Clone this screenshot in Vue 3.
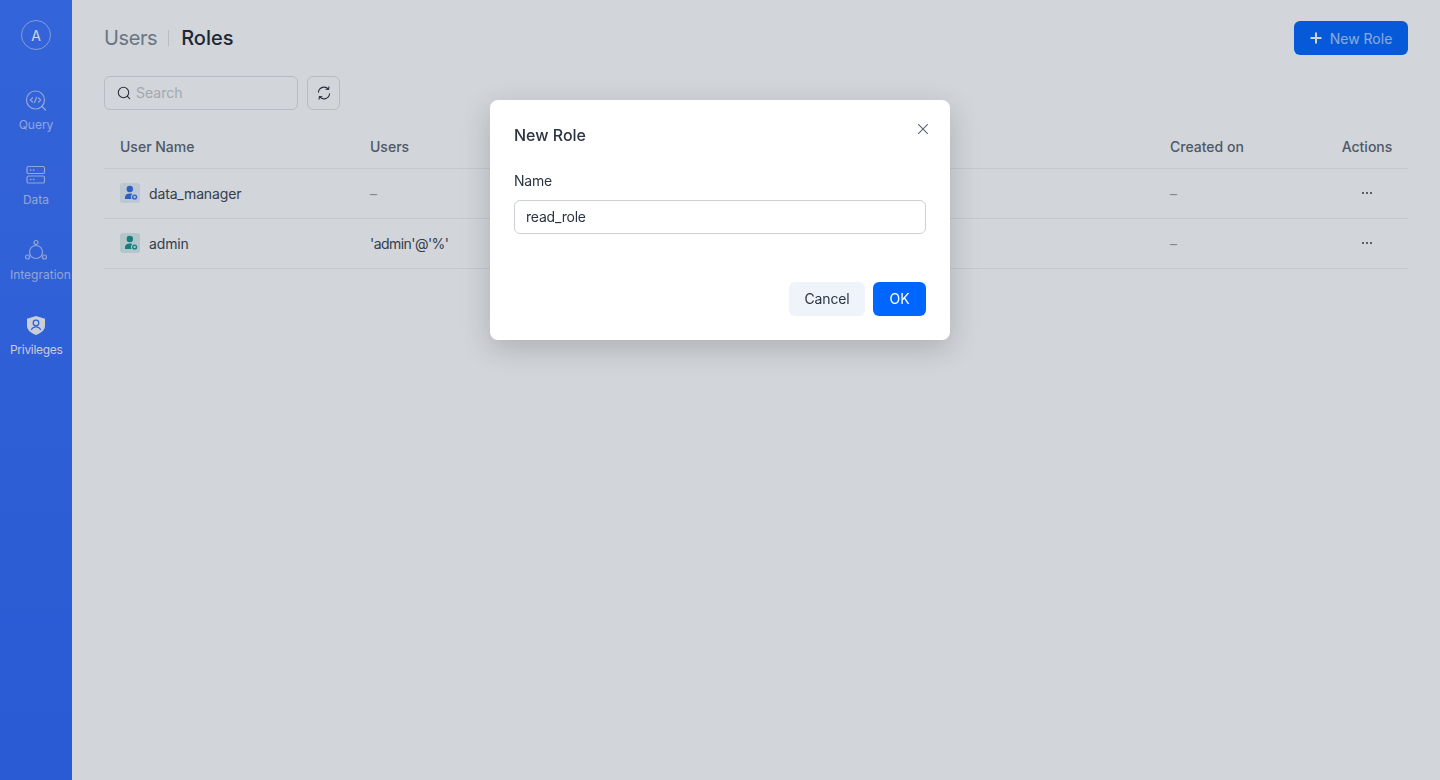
<script setup>
import { ref } from "vue";

const navItems = [
  { key: "query", label: "Query" },
  { key: "data", label: "Data" },
  { key: "integration", label: "Integration" },
  { key: "privileges", label: "Privileges", active: true },
];

const roles = [
  { name: "data_manager", users: "–", color: "blue" },
  { name: "admin", users: "'admin'@'%'", color: "teal" },
];

const roleName = ref("read_role");
</script>

<template>
  <div class="layout">
    <aside class="sidebar">
      <div class="avatar">A</div>
      <nav class="nav">
        <div
          v-for="item in navItems"
          :key="item.key"
          class="nav-item"
          :class="{ active: item.active }"
        >
          <svg v-if="item.key === 'query'" viewBox="0 -1 24 24" width="24" height="24" fill="none" stroke="currentColor" stroke-width="1.2" stroke-linecap="round" stroke-linejoin="round">
            <circle cx="11.5" cy="11" r="9" />
            <path d="M18 17.5l3.5 3.5" />
            <path d="M8.5 9l-2.2 2 2.2 2M14.5 9l2.2 2-2.2 2M12.6 8.4l-2.2 5.2" />
          </svg>
          <svg v-else-if="item.key === 'data'" viewBox="0 0 24 24" width="24" height="24" fill="none" stroke="currentColor" stroke-width="1.2" stroke-linecap="round">
            <rect x="3" y="3.5" width="17.5" height="7" rx="1.6" />
            <rect x="3" y="13" width="17.5" height="7" rx="1.6" />
            <path d="M6.4 7h.5M9.4 7h.5M6.4 16.5h.5M9.4 16.5h.5" stroke-width="1.5" />
          </svg>
          <svg v-else-if="item.key === 'integration'" viewBox="0 0 24 24" width="24" height="24" fill="none" stroke="currentColor" stroke-width="1.2">
            <circle cx="12" cy="14" r="6.500" />
            <circle cx="12" cy="4.500" r="2" />
            <circle cx="3.500" cy="19" r="2" />
            <circle cx="20.500" cy="19" r="2" />
          </svg>
          <svg v-else viewBox="0 0 24 24" width="24" height="24">
            <path d="M12 3l9 2.800v6.700c0 4.600-3.800 7.500-9 9.500-5.200-2-9-4.900-9-9.500V5.800z" fill="currentColor" />
            <circle cx="12" cy="10" r="2.800" fill="none" stroke="#3470ff" stroke-width="1.300" />
            <path d="M7.500 16.500c1-1.800 2.600-2.600 4.500-2.600s3.500.8 4.500 2.600" fill="none" stroke="#3470ff" stroke-width="1.300" stroke-linecap="round" />
          </svg>
          <span class="nav-label">{{ item.label }}</span>
        </div>
      </nav>
    </aside>

    <main class="main">
      <header class="page-head">
        <div class="tabs">
          <span class="tab">Users</span>
          <i class="tab-sep"></i>
          <span class="tab current">Roles</span>
        </div>
        <button class="btn-new">
          <svg viewBox="0 0 12 12" width="12" height="12" fill="none" stroke="currentColor" stroke-width="2">
            <path d="M6 .5v11M.5 6h11" />
          </svg>
          <span>New Role</span>
        </button>
      </header>

      <div class="toolbar">
        <label class="search">
          <svg viewBox="0 0 14 14" width="14" height="14" fill="none" stroke="#2c3441" stroke-width="1.100" stroke-linecap="round">
            <circle cx="6.500" cy="6.500" r="5.200" />
            <path d="M10.400 10.400l2.300 2.300" />
          </svg>
          <span class="placeholder">Search</span>
        </label>
        <button class="btn-refresh">
          <svg viewBox="0 0 14 14" width="14" height="14" fill="none" stroke="#2c3441" stroke-width="1.100" stroke-linecap="round" stroke-linejoin="round">
            <path d="M1.400 6.200A5.700 5.700 0 0 1 11.500 3.300" />
            <path d="M12.600 7.800A5.700 5.700 0 0 1 2.500 10.700" />
            <path d="M11.900 .9l-.3 2.600-2.600-.2M2.100 13.100l.3-2.600 2.600.2" />
          </svg>
        </button>
      </div>

      <table class="grid">
        <thead>
          <tr>
            <th class="col-name">User Name</th>
            <th>Users</th>
            <th class="col-created">Created on</th>
            <th class="col-actions">Actions</th>
          </tr>
        </thead>
        <tbody>
          <tr v-for="role in roles" :key="role.name">
            <td>
              <div class="role-cell">
                <span class="role-icon" :class="role.color">
                  <svg viewBox="0 0 20 20" width="20" height="20">
                    <circle cx="9.800" cy="6" r="3.200" fill="currentColor" />
                    <path d="M5 16v-1.700c0-2.300 1.800-3.700 4.800-3.700 1 0 1.900.1 2.600.4a4 4 0 0 0-.9 5z" fill="currentColor" />
                    <circle cx="14.600" cy="14" r="1.900" fill="none" stroke="currentColor" stroke-width="1.400" />
                  </svg>
                </span>
                <span>{{ role.name }}</span>
              </div>
            </td>
            <td :class="role.users === '–' ? 'muted' : 'host'">{{ role.users }}</td>
            <td class="muted">–</td>
            <td class="col-actions">
              <svg class="more" viewBox="0 0 10 2" width="10" height="2" fill="#1f2733">
                <circle cx="1" cy="1" r="0.900" />
                <circle cx="5" cy="1" r="0.900" />
                <circle cx="9" cy="1" r="0.900" />
              </svg>
            </td>
          </tr>
        </tbody>
      </table>
    </main>

    <div class="mask">
      <div class="modal">
        <h2 class="modal-title">New Role</h2>
        <button class="modal-close" aria-label="Close">
          <svg viewBox="0 0 12 12" width="12" height="12" fill="none" stroke="#5b6471" stroke-width="1.100">
            <path d="M1.200 1.200l9.600 9.600M10.800 1.200l-9.600 9.600" />
          </svg>
        </button>
        <label class="field-label" for="role-name">Name</label>
        <input id="role-name" v-model="roleName" class="field-input" type="text" />
        <div class="modal-foot">
          <button class="btn-cancel">Cancel</button>
          <button class="btn-ok">OK</button>
        </div>
      </div>
    </div>
  </div>
</template>

<style>
html, body { margin: 0; background: #fff; }
</style>

<style scoped>
.layout {
  display: flex;
  min-height: 780px;
  font-family: Inter, "Liberation Sans", sans-serif;
  font-size: 14px;
  color: #1f2733;
}

.sidebar {
  width: 72px;
  flex: none;
  display: flex;
  flex-direction: column;
  align-items: center;
  background: linear-gradient(180deg, #3a72ff 0%, #2d66f9 100%);
}
.avatar {
  width: 30px;
  height: 30px;
  box-sizing: border-box;
  margin-top: 20px;
  border: 1px solid rgba(255, 255, 255, 0.5);
  border-radius: 50%;
  display: flex;
  align-items: center;
  justify-content: center;
  color: #fff;
  font-size: 14px;
}
.nav {
  margin-top: 38px;
  display: flex;
  flex-direction: column;
  gap: 29px;
}
.nav-item {
  width: 52px;
  height: 46px;
  display: flex;
  flex-direction: column;
  align-items: center;
  justify-content: space-between;
  color: rgba(255, 255, 255, 0.6);
  font-size: 12px;
  line-height: 18px;
}
.nav-label {
  display: block;
  width: 52px;
  text-align: center;
  white-space: nowrap;
}
.nav-item.active { color: rgba(255, 255, 255, 0.95); }
.nav-item.active .nav-label { letter-spacing: -0.3px; }

.main {
  flex: 1;
  min-width: 0;
  padding: 0 32px;
}
.page-head {
  height: 76px;
  display: flex;
  align-items: center;
  justify-content: space-between;
}
.tabs {
  display: flex;
  align-items: center;
  font-size: 20px;
}
.tab { color: #7d8794; font-weight: 400; letter-spacing: -0.4px; }
.tab.current { color: #1f2733; font-weight: 500; letter-spacing: 0; }
.tab-sep {
  width: 1px;
  height: 16px;
  margin: 0 12px 0 11px;
  background: #dfe2e6;
}
.btn-new {
  width: 114px;
  height: 34px;
  display: flex;
  align-items: center;
  justify-content: center;
  gap: 8px;
  border: 0;
  border-radius: 6px;
  background: #0066ff;
  color: #fff;
  font: inherit;
  font-size: 14px;
}
.btn-new span { opacity: 0.65; }

.toolbar {
  display: flex;
  gap: 9px;
  margin-bottom: 16px;
}
.search {
  width: 194px;
  height: 34px;
  box-sizing: border-box;
  display: flex;
  align-items: center;
  gap: 5px;
  padding: 0 12px;
  border: 1px solid #dde0e6;
  border-radius: 6px;
}
.placeholder { color: #c3c8d0; position: relative; top: -1px; }
.btn-refresh {
  width: 33px;
  height: 34px;
  padding: 0;
  display: flex;
  align-items: center;
  justify-content: center;
  border: 1px solid #dde0e6;
  border-radius: 6px;
  background: transparent;
}

.grid {
  width: 100%;
  border-collapse: collapse;
  table-layout: fixed;
}
.grid th {
  height: 42px;
  padding: 0 16px;
  box-sizing: border-box;
  text-align: left;
  font-weight: 500;
  color: #5b6471;
  border-bottom: 1px solid #eef0f3;
}
.grid td {
  height: 50px;
  padding: 0 16px;
  box-sizing: border-box;
  color: #3a4350;
  letter-spacing: -0.15px;
  border-bottom: 1px solid #eef0f3;
}
.grid td.muted { color: #9aa1ab; }
.grid td.host { letter-spacing: -0.55px; }
.col-name { width: 250px; }
.col-created { width: 172px; }
.grid th.col-actions { width: 82px; padding: 0; text-align: center; }
.grid td.col-actions { padding: 0; text-align: center; }
.more { display: inline-block; vertical-align: middle; margin-bottom: 3px; }
.role-cell {
  display: flex;
  align-items: center;
  gap: 9px;
}
.role-icon {
  width: 20px;
  height: 20px;
  display: block;
  border-radius: 3px;
}
.role-icon svg { display: block; }
.role-icon.blue { background: #e6eef9; color: #2f6fe4; }
.role-icon.teal { background: #d9eeee; color: #15908c; }

.mask {
  position: fixed;
  inset: 0;
  background: rgba(30, 45, 65, 0.2);
}
.modal {
  position: absolute;
  left: 490px;
  top: 100px;
  width: 460px;
  height: 240px;
  box-sizing: border-box;
  padding: 24px;
  display: flex;
  flex-direction: column;
  background: #fff;
  border-radius: 8px;
  box-shadow: 0 8px 28px rgba(31, 39, 51, 0.22);
}
.modal-title {
  margin: 0;
  font-size: 16px;
  line-height: 22px;
  font-weight: 500;
  color: #2c3441;
}
.modal-close {
  position: absolute;
  top: 23px;
  right: 21px;
  width: 12px;
  height: 12px;
  padding: 0;
  border: 0;
  background: none;
}
.modal-close svg { display: block; }
.field-label {
  margin-top: 24px;
  line-height: 22px;
  color: #2c3441;
  letter-spacing: -0.2px;
}
.field-input {
  margin-top: 8px;
  height: 34px;
  box-sizing: border-box;
  padding: 0 11px 2px;
  border: 1px solid #ccd0d5;
  border-radius: 6px;
  outline: none;
  font: inherit;
  letter-spacing: -0.2px;
  color: #2c3441;
}
.modal-foot {
  margin-top: auto;
  display: flex;
  justify-content: flex-end;
  gap: 8px;
}
.btn-cancel, .btn-ok {
  height: 34px;
  padding: 0 0 2px;
  border: 0;
  border-radius: 6px;
  font: inherit;
}
.btn-cancel {
  width: 76px;
  background: #eff3fa;
  color: #2c3441;
  letter-spacing: -0.15px;
}
.btn-ok {
  width: 53px;
  background: #0066ff;
  color: #fff;
}
</style>
